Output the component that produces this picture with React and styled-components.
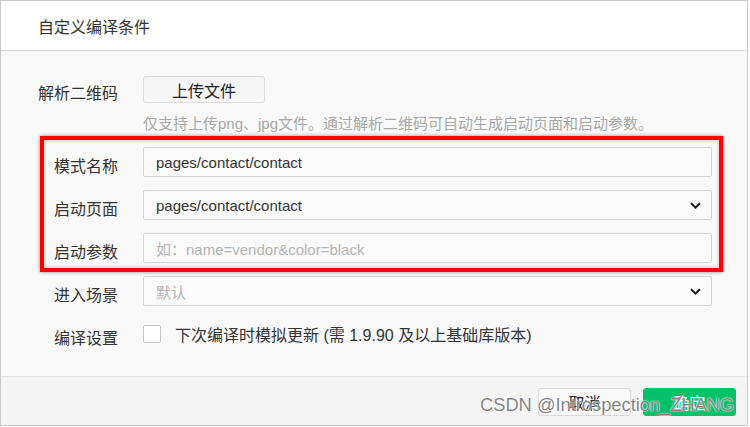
import React from 'react';
import styled, { createGlobalStyle } from 'styled-components';

const GlobalStyle = createGlobalStyle`
  body {
    margin: 0;
    background: #fff;
    font-family: "Liberation Sans", "Noto Sans CJK SC", sans-serif;
  }
`;

const Dialog = styled.div`
  width: 748px;
  height: 426px;
  box-sizing: border-box;
  border: 1px solid #c9c9c9;
  display: flex;
  flex-direction: column;
  background: #f9f9f9;
`;

const Header = styled.div`
  height: 49px;
  flex: none;
  background: #fff;
  border-bottom: 1px solid #d6d6d6;
  display: flex;
  align-items: center;
  padding-left: 37px;
  font-size: 16px;
  color: #333;
`;

const Body = styled.div`
  flex: 1;
  padding: 25px 35px 0 0;
  display: flex;
  flex-direction: column;
  gap: 13px;
`;

const Row = styled.div`
  display: flex;
  align-items: ${p => (p.$top ? 'flex-start' : 'center')};
  gap: 25px;
`;

const Label = styled.div`
  width: 117px;
  flex: none;
  text-align: right;
  font-size: 16px;
  color: #333;
  padding-top: ${p => p.$shift || 6}px;
`;

const Stack = styled.div`
  display: flex;
  flex-direction: column;
  gap: 11px;
`;

const UploadButton = styled.div`
  width: 120px;
  height: 25px;
  border: 1px solid #dcdcdc;
  border-radius: 3px;
  background: #f6f6f6;
  display: flex;
  align-items: center;
  justify-content: center;
  font-size: 16px;
  color: #222;
`;

const Hint = styled.div`
  font-size: 15px;
  line-height: 20px;
  color: #a8a8a8;
  white-space: nowrap;
`;

const Highlight = styled.div`
  position: relative;
  display: flex;
  flex-direction: column;
  gap: 13px;

  &::before {
    content: '';
    position: absolute;
    top: -11px;
    bottom: -9px;
    left: 39px;
    right: -11px;
    border: 4px solid #ff0000;
    box-shadow: 0 0 4px rgba(0, 0, 0, 0.45), inset 0 0 4px rgba(0, 0, 0, 0.25);
    pointer-events: none;
  }
`;

const Field = styled.div`
  flex: 1;
  height: 28px;
  border: 1px solid #d4d4d4;
  border-radius: 2px;
  background: #fafafa;
  display: flex;
  align-items: center;
  justify-content: space-between;
  padding: 0 10px 0 12px;
  font-size: 15px;
  color: ${p => (p.$placeholder ? '#b4b4b4' : '#333')};
`;

const Chevron = () => (
  <svg width="11" height="7" viewBox="0 0 11 7">
    <path d="M1 1.2 L5.5 5.5 L10 1.2" fill="none" stroke="#222" strokeWidth="2" />
  </svg>
);

const Checkbox = styled.div`
  width: 16px;
  height: 16px;
  flex: none;
  border: 1px solid #c8c8c8;
  border-radius: 2px;
  background: #fff;
`;

const CheckLabel = styled.div`
  display: flex;
  align-items: center;
  gap: 14px;
  height: 30px;
  font-size: 16px;
  color: #333;
`;

const Footer = styled.div`
  position: relative;
  height: 49px;
  flex: none;
  background: #f4f4f4;
  border-top: 1px solid #dedede;
  display: flex;
  justify-content: flex-end;
  align-items: flex-start;
  gap: 12px;
  padding: 11px 11px 0 0;
  box-sizing: border-box;
`;

const Button = styled.div`
  width: 93px;
  height: 28px;
  box-sizing: border-box;
  border-radius: 3px;
  display: flex;
  align-items: center;
  justify-content: center;
  font-size: 16px;
  border: 1px solid ${p => (p.$primary ? '#05c26a' : '#dadada')};
  background: ${p => (p.$primary ? '#05c26a' : '#f9f9f9')};
  color: ${p => (p.$primary ? '#fff' : '#222')};
`;

const Watermark = styled.div`
  position: absolute;
  left: 479px;
  top: 17px;
  font-size: 18.3px;
  line-height: 22px;
  color: rgba(110, 110, 110, 0.85);
  text-shadow: 0 0 2px #fff, 0 0 1px #fff;
  white-space: nowrap;
  pointer-events: none;
`;

export default function App() {
  return (
    <>
      <GlobalStyle />
      <Dialog>
        <Header>自定义编译条件</Header>
        <Body>
          <Row $top>
            <Label $shift={4}>解析二维码</Label>
            <Stack>
              <UploadButton>上传文件</UploadButton>
              <Hint>仅支持上传png、jpg文件。通过解析二维码可自动生成启动页面和启动参数。</Hint>
            </Stack>
          </Row>
          <Highlight>
            <Row>
              <Label>模式名称</Label>
              <Field>pages/contact/contact</Field>
            </Row>
            <Row>
              <Label>启动页面</Label>
              <Field>
                pages/contact/contact
                <Chevron />
              </Field>
            </Row>
            <Row>
              <Label>启动参数</Label>
              <Field $placeholder>如：name=vendor&amp;color=black</Field>
            </Row>
          </Highlight>
          <Row>
            <Label>进入场景</Label>
            <Field $placeholder>
              默认
              <Chevron />
            </Field>
          </Row>
          <Row>
            <Label>编译设置</Label>
            <CheckLabel>
              <Checkbox />
              下次编译时模拟更新 (需 1.9.90 及以上基础库版本)
            </CheckLabel>
          </Row>
        </Body>
        <Footer>
          <Button>取消</Button>
          <Button $primary>确定</Button>
          <Watermark>CSDN @Introspection_ZHANG</Watermark>
        </Footer>
      </Dialog>
    </>
  );
}
